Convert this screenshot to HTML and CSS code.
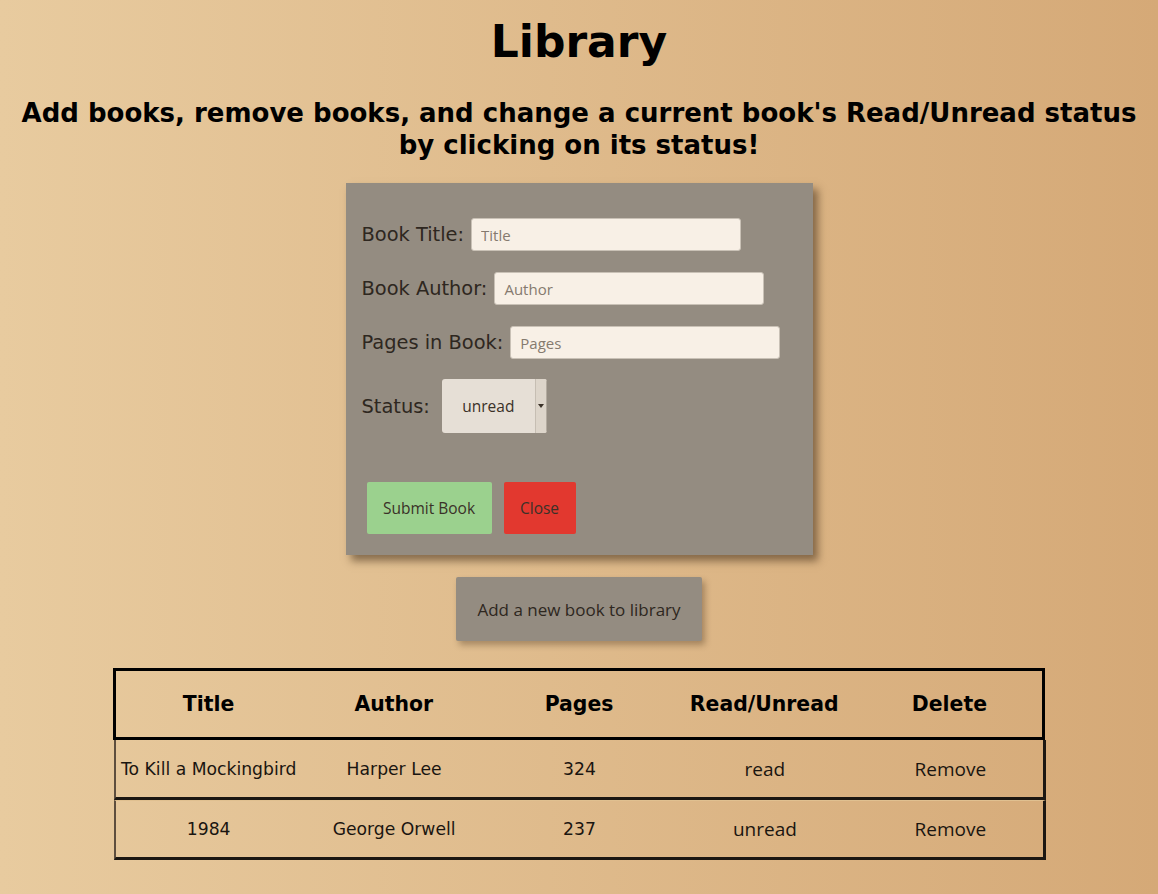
FILE: index.html
```html
<!DOCTYPE html>
<html lang="en">
<head>
<meta charset="utf-8">
<title>Library</title>
<link rel="stylesheet" href="styles.css">
</head>
<body>
<h1 class="title">Library</h1>
<h2 class="subtitle">Add books, remove books, and change a current book's Read/Unread status by clicking on its status!</h2>

<form class="card">
  <div class="field">
    <label class="label" for="t">Book Title:</label>
    <input class="input" id="t" type="text" placeholder="Title">
  </div>
  <div class="field">
    <label class="label" for="a">Book Author:</label>
    <input class="input" id="a" type="text" placeholder="Author">
  </div>
  <div class="field">
    <label class="label" for="p">Pages in Book:</label>
    <input class="input" id="p" type="text" placeholder="Pages">
  </div>
  <div class="field status-field">
    <label class="label" for="s">Status:</label>
    <div class="select">
      <span class="select-value">unread</span>
      <span class="select-arrow"><svg width="6" height="4" viewBox="0 0 6 4"><path d="M0 0h6L3 4z" fill="#3a3128"/></svg></span>
    </div>
  </div>
  <div class="actions">
    <button type="button" class="btn btn-submit">Submit Book</button>
    <button type="button" class="btn btn-close">Close</button>
  </div>
</form>

<div class="add-wrap"><button type="button" class="add-btn">Add a new book to library</button></div>

<div class="table">
  <div class="thead">
    <div>Title</div><div>Author</div><div>Pages</div><div>Read/Unread</div><div>Delete</div>
  </div>
  <div class="trow">
    <div>To Kill a Mockingbird</div><div>Harper Lee</div><div>324</div><div class="ui">read</div><div class="ui">Remove</div>
  </div>
  <div class="trow">
    <div>1984</div><div>George Orwell</div><div>237</div><div class="ui">unread</div><div class="ui">Remove</div>
  </div>
</div>
</body>
</html>
```

FILE: styles.css
```css
html { min-height: 100%; }
body {
  margin: 0;
  min-height: 894px;
  background: linear-gradient(to right, #e8cb9f, #d5a977);
  font-family: "DejaVu Sans", sans-serif;
  color: #000;
  overflow: hidden;
}
.title {
  margin: 16px 0 0;
  font-size: 44px;
  line-height: 51px;
  text-align: center;
  font-weight: bold;
}
.subtitle {
  margin: 30px 8px 22px;
  font-size: 26px;
  line-height: 32px;
  text-align: center;
  font-weight: bold;
}
.card {
  width: 467px;
  height: 372px;
  box-sizing: border-box;
  margin: 0 auto;
  background: #948c81;
  padding: 35px 16px 0;
  box-shadow: 5px 6px 8px rgba(60, 40, 20, 0.55);
  display: flex;
  flex-direction: column;
}
.field {
  display: flex;
  align-items: center;
  height: 33px;
  margin-bottom: 21px;
}
.label {
  font-size: 19.4px;
  color: #2e2720;
  margin-right: 7px;
}
.input {
  width: 270px;
  height: 33px;
  box-sizing: border-box;
  border: 1px solid #c9c1b6;
  border-radius: 3px;
  background: #f8f0e6;
  padding: 0 9px;
  font-family: "Open Sans", sans-serif;
  font-size: 15px;
  color: #3a3128;
}
.input::placeholder { color: #857a6e; }
.status-field { height: 54px; margin-top: -1px; margin-bottom: 0; }
.status-field .label { margin-right: 12px; }
.select {
  width: 105px;
  height: 54px;
  display: flex;
  border-radius: 3px;
  background: #e6dfd6;
  overflow: hidden;
}
.select-value {
  flex: 1;
  display: flex;
  align-items: center;
  justify-content: center;
  font-family: "Open Sans", sans-serif;
  font-size: 15.5px;
  color: #3a3128;
}
.select-arrow {
  width: 10px;
  display: flex;
  align-items: center;
  justify-content: center;
  background: #ddd5ca;
  border-left: 1px solid #c6beb3;
  border-right: 1px solid #b3ab9f;
}
.actions {
  display: flex;
  gap: 12px;
  margin-top: 49px;
  padding-left: 5px;
}
.btn {
  height: 52px;
  border: none;
  border-radius: 2px;
  font-family: "Open Sans", sans-serif;
  font-size: 15.5px;
  color: #3a3128;
  padding: 0;
}
.btn-submit { width: 125px; background: #9bd18e; }
.btn-close { width: 72px; background: #e2382f; }
.add-wrap {
  display: flex;
  justify-content: center;
  margin-top: 22px;
}
.add-btn {
  width: 246px;
  height: 64px;
  border: none;
  border-radius: 2px;
  background: #948c81;
  font-family: "Open Sans", sans-serif;
  font-size: 17px;
  color: #2e2720;
  box-shadow: 3px 4px 6px rgba(60, 40, 20, 0.35);
  padding: 0;
}
.table {
  width: 932px;
  margin: 27px auto 0;
}
.thead, .trow {
  display: grid;
  grid-template-columns: repeat(5, 1fr);
  align-items: center;
  text-align: center;
  box-sizing: border-box;
}
.thead {
  height: 72px;
  border: 3px solid #000;
  font-weight: bold;
  font-size: 20.4px;
}
.trow {
  height: 60px;
  margin-left: 1px;
  margin-right: -1px;
  border-left: 2px solid #5e4e3e;
  border-right: 3px solid #1c1712;
  border-bottom: 3px solid #1c1712;
  font-size: 17.2px;
  color: #1a1510;
}
.trow + .trow { border-top: 1px solid #e0c090; }
.trow .ui {
  font-family: "Open Sans", sans-serif;
  font-size: 19px;
}
```
